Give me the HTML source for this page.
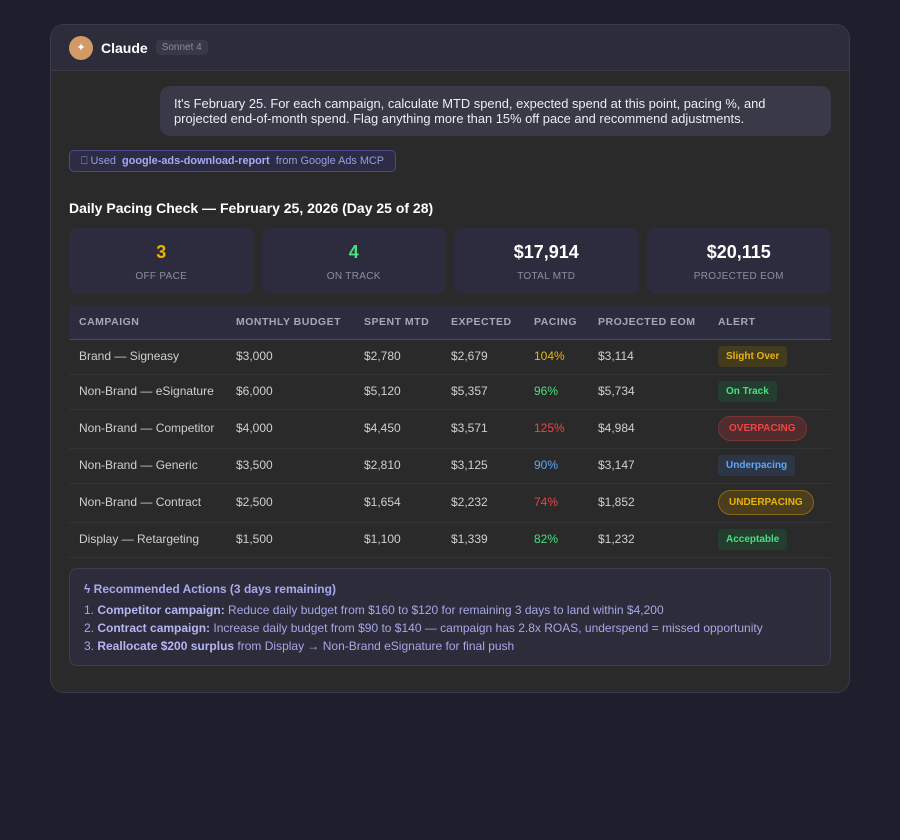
<!DOCTYPE html>
<html><head><meta charset="utf-8"><style>
*{box-sizing:border-box;margin:0;padding:0}
body{width:900px;height:840px;background:#1f1e2c;font-family:"Liberation Sans",sans-serif;position:relative;overflow:hidden}
.card{position:absolute;left:50px;top:24px;width:800px;height:669px;background:#2a2a2a;border:1px solid #3a3a48;border-radius:14px;overflow:hidden}
.hdr{height:46px;background:#2d2c3b;border-bottom:1px solid #3c3b4c;display:flex;align-items:center;padding-left:18px}
.av{width:24px;height:24px;border-radius:50%;background:#d29a64;color:#fff;font-size:11px;display:flex;align-items:center;justify-content:center}
.nm{color:#fff;font-weight:bold;font-size:14px;margin-left:8px}
.tag{background:#383846;color:#8a8a98;font-size:10px;padding:2px 6px;border-radius:4px;margin-left:8px}
.msg{position:absolute;left:109px;top:61px;width:671px;height:50px;background:#3a3948;border-radius:10px;color:#ececf2;font-size:12.9px;line-height:15px;padding:10px 14px}
.tool{position:absolute;left:18px;top:125px;height:22px;border:1px solid #4a4a8a;background:#2c2c44;border-radius:5px;color:#9a9ce0;font-size:10.9px;padding:0 11px;display:flex;align-items:center;white-space:pre}
.tool b{color:#a8aaf0}
h2{position:absolute;left:18px;top:175px;color:#fff;font-size:14px;font-weight:bold}
.stats{position:absolute;left:18px;top:203px;width:762px;display:flex;gap:8px}
.st{flex:1;height:66px;background:#2d2c3f;border-radius:9px;text-align:center}
.st .v{font-size:18px;font-weight:bold;margin-top:14px;color:#fff}
.st .v.y{color:#eab308}.st .v.g{color:#4ade80}
.st .l{font-size:10px;color:#8e8e9a;margin-top:8px;letter-spacing:.3px}
table{position:absolute;left:18px;top:280px;width:762px;border-collapse:collapse;font-size:12px}
th{background:#2d2c3f;color:#a6a6b4;font-size:10.5px;text-align:left;font-weight:bold;letter-spacing:.5px;height:34px;padding-left:10px;border-bottom:1px solid #4a4a58}
td{color:#cfcfd4;padding-left:10px;height:35px;border-bottom:1px solid #333338;padding-bottom:1px}
td.tall{height:39px}
.y{color:#eab308}.g{color:#4ade80}.r{color:#ef4444}.b{color:#60a5fa}.o{color:#f59e0b}
.p{display:inline-block;font-size:10px;font-weight:bold;padding:5px 8px;border-radius:4px}
.pr{display:inline-block;font-size:10px;font-weight:bold;padding:6px 10px;border-radius:14px}
.rec{position:absolute;left:18px;top:543px;width:762px;height:98px;background:#2d2c3b;border:1px solid #3e3d55;border-radius:8px;padding:11px 14px;color:#a6a8e6;font-size:12px}
.rec .t{font-weight:bold;color:#a8aaf0;margin-bottom:3px}
.rec div{line-height:18px}
.rec b{color:#b4b6f4}
</style></head><body>
<div class="card">
<div class="hdr"><div class="av">✦</div><span class="nm">Claude</span><span class="tag">Sonnet 4</span></div>
<div class="msg">It's February 25. For each campaign, calculate MTD spend, expected spend at this point, pacing %, and projected end-of-month spend. Flag anything more than 15% off pace and recommend adjustments.</div>
<div class="tool">⎕ Used  <b>google-ads-download-report</b>  from Google Ads MCP</div>
<h2>Daily Pacing Check — February 25, 2026 (Day 25 of 28)</h2>
<div class="stats">
<div class="st"><div class="v y">3</div><div class="l">OFF PACE</div></div>
<div class="st"><div class="v g">4</div><div class="l">ON TRACK</div></div>
<div class="st"><div class="v">$17,914</div><div class="l">TOTAL MTD</div></div>
<div class="st"><div class="v">$20,115</div><div class="l">PROJECTED EOM</div></div>
</div>
<table>
<colgroup><col style="width:157px"><col style="width:128px"><col style="width:87px"><col style="width:83px"><col style="width:64px"><col style="width:120px"><col></colgroup>
<tr><th>CAMPAIGN</th><th>MONTHLY BUDGET</th><th>SPENT MTD</th><th>EXPECTED</th><th>PACING</th><th>PROJECTED EOM</th><th>ALERT</th></tr>
<tr><td>Brand — Signeasy</td><td>$3,000</td><td>$2,780</td><td>$2,679</td><td class="y">104%</td><td>$3,114</td><td><span class="p y" style="background:#433b1f">Slight Over</span></td></tr>
<tr><td>Non-Brand — eSignature</td><td>$6,000</td><td>$5,120</td><td>$5,357</td><td class="g">96%</td><td>$5,734</td><td><span class="p g" style="background:#233d2e">On Track</span></td></tr>
<tr><td class="tall">Non-Brand — Competitor</td><td>$4,000</td><td>$4,450</td><td>$3,571</td><td class="r">125%</td><td>$4,984</td><td><span class="pr r" style="background:#4f2c2e;border:1px solid #7a3434">OVERPACING</span></td></tr>
<tr><td>Non-Brand — Generic</td><td>$3,500</td><td>$2,810</td><td>$3,125</td><td class="b">90%</td><td>$3,147</td><td><span class="p b" style="background:#2c3647">Underpacing</span></td></tr>
<tr><td class="tall">Non-Brand — Contract</td><td>$2,500</td><td>$1,654</td><td>$2,232</td><td class="r">74%</td><td>$1,852</td><td><span class="pr y" style="background:#4b3e1f;border:1px solid #85661f">UNDERPACING</span></td></tr>
<tr><td>Display — Retargeting</td><td>$1,500</td><td>$1,100</td><td>$1,339</td><td class="g">82%</td><td>$1,232</td><td><span class="p g" style="background:#233d2e">Acceptable</span></td></tr>
</table>
<div class="rec">
<div class="t">ϟ Recommended Actions (3 days remaining)</div>
<div>1. <b>Competitor campaign:</b> Reduce daily budget from $160 to $120 for remaining 3 days to land within $4,200</div>
<div>2. <b>Contract campaign:</b> Increase daily budget from $90 to $140 — campaign has 2.8x ROAS, underspend = missed opportunity</div>
<div>3. <b>Reallocate $200 surplus</b> from Display → Non-Brand eSignature for final push</div>
</div>
</div>
</body></html>
